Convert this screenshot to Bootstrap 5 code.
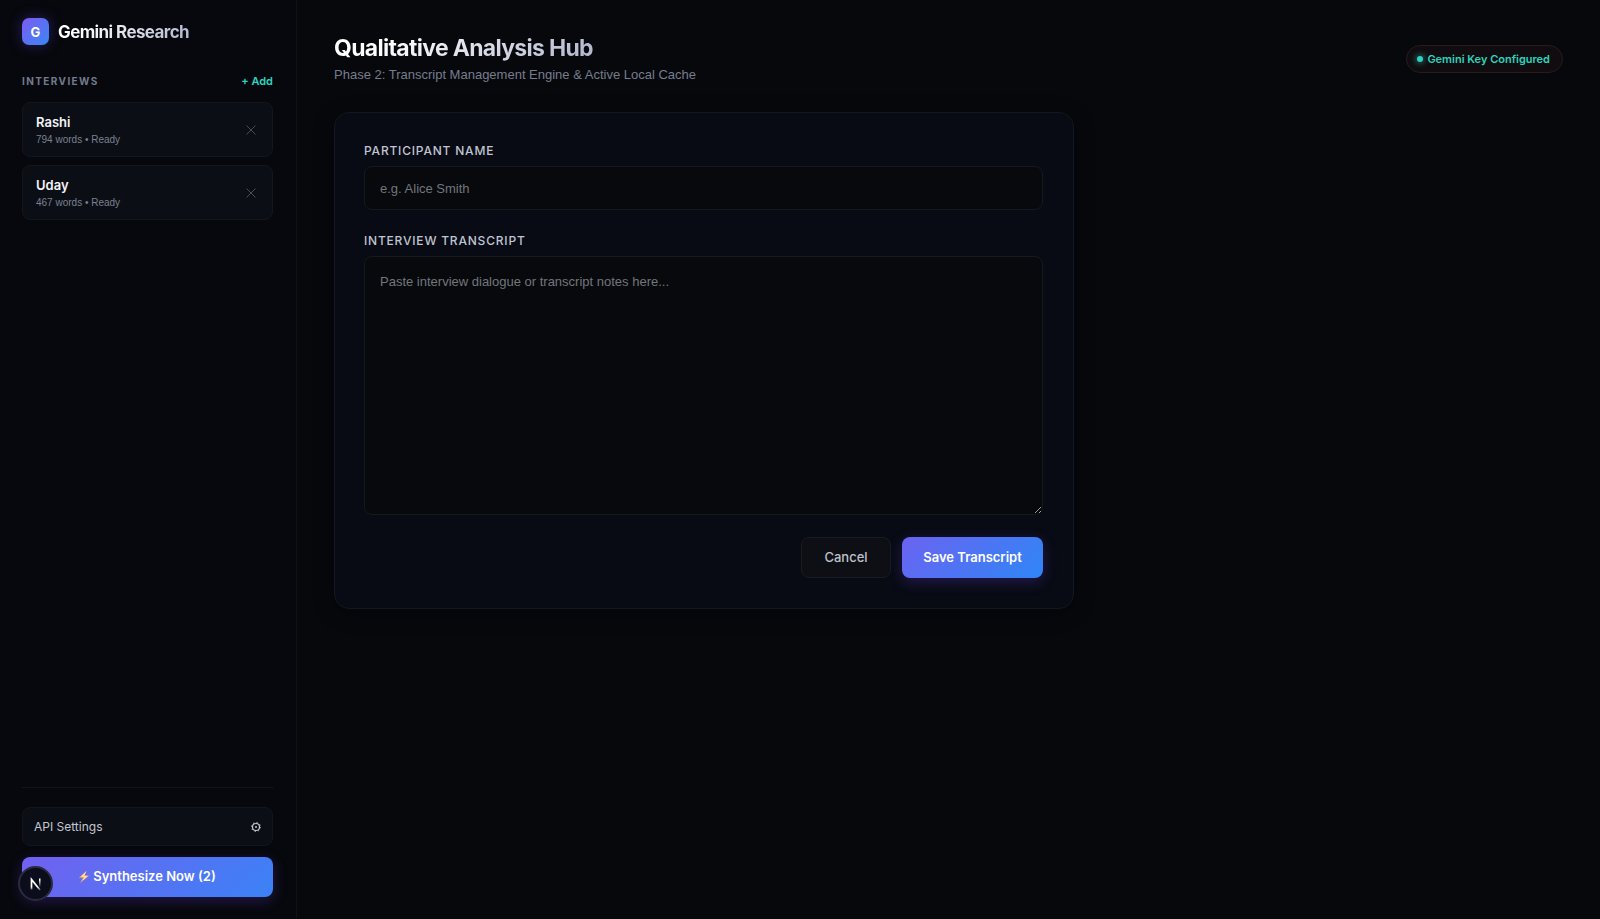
<!DOCTYPE html>
<html lang="en" data-bs-theme="dark">
<head>
<meta charset="utf-8">
<meta name="viewport" content="width=device-width, initial-scale=1">
<title>Qualitative Analysis Hub</title>
<link href="https://cdn.jsdelivr.net/npm/bootstrap@5.3.0/dist/css/bootstrap.min.css" rel="stylesheet">
<style>
  body { background: #06080c; color: #f3f4f8; font-family: Inter, "Liberation Sans", sans-serif; font-size: 13px; line-height: 20px; }
  .sidebar { width: 297px; background: #07080d; border-right: 1px solid #101218; padding: 18px 23px 22px 22px; }
  .brand-row { gap: 9px; }
  .logo { width: 27px; height: 27px; border-radius: 7px; font-size: 13px; background: linear-gradient(135deg, #7c5cf0, #3a86f6); box-shadow: 0 0 14px rgba(99, 70, 240, .35); }
  .brand-name { font-size: 17px; letter-spacing: -.6px; }
  .grad-text { background: linear-gradient(135deg, #fff 20%, #b0b4cc); -webkit-background-clip: text; background-clip: text; color: transparent; }
  .section-head { margin: 26px 0 11px; }
  .section-title { font-size: 10px; letter-spacing: 1.4px; color: #747b8b; }
  .add-btn { font-size: 11px; color: #2dd4bf; line-height: 18px; }
  .entry { background: #0b0e15; border: 1px solid #12161d; border-radius: 8px; padding: 9px 12px 9px 13px; }
  .entry-name { font-size: 13px; line-height: 20px; color: #f3f4f8; }
  .entry-meta { font-family: "Liberation Sans", sans-serif; font-size: 10px; line-height: 15px; color: #7b8190; }
  .remove-btn { width: 18px; height: 18px; color: #484c55; }
  .side-foot { border-top: 1px solid #11141a; padding-top: 19px; gap: 11px; }
  .settings-btn { background: #0b0e15; border: 1px solid #11161d; border-radius: 8px; height: 39px; padding: 0 11px; font-size: 12px; color: #c3c7d1; }
  .grad-btn { border: 0; color: #fff; font-size: 13px; font-weight: 600; border-radius: 8px; background: linear-gradient(135deg, #6b63f1, #2f86f6); box-shadow: 0 4px 14px rgba(99, 60, 220, .3); }
  .synth-btn { height: 40px; background: linear-gradient(135deg, #7261f0, #3b82f6); }
  .dev-badge, .dev-badge:hover { left: 18px; bottom: 18px; width: 35px; height: 35px; background: #0c0d1c; border: 2px solid #2b2b3e; }
  main { padding: 34px 37px; min-width: 0; }
  h1 { font-size: 23px; line-height: 28px; letter-spacing: -.7px; }
  .subtitle { font-family: "Liberation Sans", sans-serif; font-size: 13px; line-height: 18px; margin: 4px 0 0; color: #777d8c; }
  .key-pill { height: 28px; padding: 0 12px 0 10px; font-size: 11px; font-weight: 600; color: #2dd4bf; background: #100c0f; border: 1px solid #291b1b; }
  .dot { width: 6px; height: 6px; background: #2dd4bf; box-shadow: 0 0 7px #2dd4bf; }
  .panel { max-width: 740px; background: #080b14; border: 1px solid #131720; border-radius: 15px; padding: 28px 30px 30px 29px; box-shadow: 0 4px 20px rgba(0, 0, 0, .4); }
  .field-label { font-size: 12px; line-height: 20px; letter-spacing: .8px; font-weight: 500; color: #c0c5d1; margin-bottom: 5px; }
  .field { background: #07090d; border: 1px solid #151920; border-radius: 8px; color: #f3f4f8; font-family: "Liberation Sans", sans-serif; font-size: 13px; padding: 0 15px; }
  .field:focus { background: #07090d; border-color: #6b63f1; box-shadow: none; }
  .field::placeholder { color: #73767c; }
  input.field { height: 44px; margin-bottom: 21px; }
  textarea.field { height: 259px; padding: 14px 15px; line-height: 21px; resize: vertical; }
  .form-foot { margin-top: 22px; gap: 11px; }
  .form-foot button { height: 41px; font-size: 13px; }
  .cancel-btn { width: 90px; background: #0e0f14; border: 1px solid #191c22; border-radius: 8px; color: #bec2cb; font-weight: 500; }
  .save-btn { width: 141px; }
</style>
</head>
<body>
<div class="d-flex min-vh-100">
  <aside class="sidebar d-flex flex-column flex-shrink-0">
    <div class="brand-row d-flex align-items-center">
      <div class="logo d-flex align-items-center justify-content-center fw-bold text-white">G</div>
      <div class="brand-name grad-text fw-bold">Gemini Research</div>
    </div>
    <div class="section-head d-flex justify-content-between align-items-center">
      <div class="section-title fw-bold">INTERVIEWS</div>
      <button type="button" class="add-btn btn p-0 border-0 fw-semibold">+ Add</button>
    </div>
    <ul class="list-unstyled d-flex flex-column gap-2 m-0">
      <li class="entry d-flex justify-content-between align-items-center">
        <div>
          <div class="entry-name fw-semibold">Rashi</div>
          <div class="entry-meta">794 words • Ready</div>
        </div>
        <button type="button" class="remove-btn btn p-0 border-0 d-flex align-items-center justify-content-center" aria-label="Remove Rashi"><svg width="10" height="10" viewBox="0 0 10 10" stroke="currentColor"><path d="M.5.5l9 9M9.500.5l-9 9"/></svg></button>
      </li>
      <li class="entry d-flex justify-content-between align-items-center">
        <div>
          <div class="entry-name fw-semibold">Uday</div>
          <div class="entry-meta">467 words • Ready</div>
        </div>
        <button type="button" class="remove-btn btn p-0 border-0 d-flex align-items-center justify-content-center" aria-label="Remove Uday"><svg width="10" height="10" viewBox="0 0 10 10" stroke="currentColor"><path d="M.5.5l9 9M9.500.5l-9 9"/></svg></button>
      </li>
    </ul>
    <div class="side-foot d-flex flex-column mt-auto">
      <button type="button" class="settings-btn btn d-flex justify-content-between align-items-center">
        API Settings
        <svg width="10" height="10" viewBox="0 0 20 20" fill="none" stroke="currentColor"><circle cx="10" cy="10" r="7" stroke-width="2.400"/><circle cx="10" cy="10" r="2" fill="currentColor" stroke="none"/><circle cx="10" cy="10" r="9" stroke-width="2" stroke-dasharray="2.500 4.570"/></svg>
      </button>
      <button type="button" class="grad-btn synth-btn btn d-flex justify-content-center align-items-center gap-1">
        <svg width="10" height="12" viewBox="0 0 10 12"><path d="M7.500 0L0 6.600l4 .4L1 12l9-7.300-4.200-.4z" fill="#f2ad5c"/><path d="M7.500 0L2 5.500l3.500.5L3 10l5.500-4.800-3.500-.4z" fill="#ffe3ae"/></svg>
        Synthesize Now (2)
      </button>
    </div>
  </aside>

  <main class="flex-grow-1">
    <header class="d-flex justify-content-between align-items-center mb-4 pb-1">
      <div>
        <h1 class="grad-text fw-bold mb-0 d-table">Qualitative Analysis Hub</h1>
        <p class="subtitle">Phase 2: Transcript Management Engine &amp; Active Local Cache</p>
      </div>
      <div class="key-pill rounded-pill d-flex align-items-center gap-1"><span class="dot rounded-circle"></span>Gemini Key Configured</div>
    </header>

    <form class="panel">
      <label class="field-label d-block" for="participant">PARTICIPANT NAME</label>
      <input class="field form-control" type="text" id="participant" placeholder="e.g. Alice Smith">
      <label class="field-label d-block" for="transcript">INTERVIEW TRANSCRIPT</label>
      <textarea class="field form-control" id="transcript" placeholder="Paste interview dialogue or transcript notes here..."></textarea>
      <div class="form-foot d-flex justify-content-end">
        <button type="button" class="cancel-btn btn p-0">Cancel</button>
        <button type="button" class="grad-btn save-btn btn p-0">Save Transcript</button>
      </div>
    </form>
  </main>
</div>

<button type="button" class="dev-badge btn p-0 rounded-circle position-fixed d-flex align-items-center justify-content-center" aria-label="Open developer tools">
  <svg width="14" height="14" viewBox="0 0 14 14" fill="none" stroke-width="1.700">
    <defs>
      <linearGradient id="fadeDiag" x1="0" y1="0" x2="0" y2="1"><stop offset=".7" stop-color="#fff"/><stop offset="1" stop-color="#fff" stop-opacity=".3"/></linearGradient>
      <linearGradient id="fadeBar" gradientUnits="userSpaceOnUse" x1="0" y1="3" x2="0" y2="10"><stop stop-color="#fff"/><stop offset="1" stop-color="#fff" stop-opacity="0"/></linearGradient>
    </defs>
    <path d="M2.500 12.500V2.500L11 13" stroke="url(#fadeDiag)"/>
    <path d="M10 1.500h1.500V10H10z" fill="url(#fadeBar)"/>
  </svg>
</button>
<script src="https://cdn.jsdelivr.net/npm/bootstrap@5.3.0/dist/js/bootstrap.bundle.min.js"></script>
</body>
</html>
